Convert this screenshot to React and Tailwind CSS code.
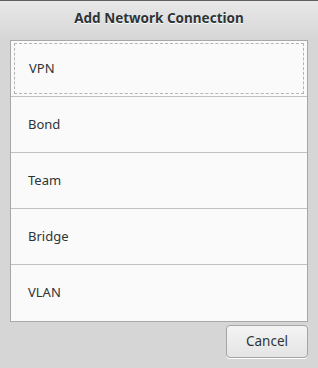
export default function App() {
  const items = ['VPN', 'Bond', 'Team', 'Bridge', 'VLAN'];
  return (
    <div
      className="w-[318px] h-[368px] flex flex-col bg-[#d6d6d6] border-t border-[#5c6060] text-[#2e3436]"
      style={{ fontFamily: '"Noto Sans", "Open Sans", sans-serif' }}
    >
      <div className="h-[39px] flex items-center justify-center bg-gradient-to-b from-[#e8e8e8] to-[#d6d6d6]">
        <h1 className="text-[13.5px] font-bold [text-shadow:0_1px_#ffffff] -mt-[4px]">Add Network Connection</h1>
      </div>
      <div className="mx-[10px] h-[282px] border border-[#a8a8a8] bg-[#fafafa] flex flex-col">
        {items.map((name, i) => (
          <div
            key={name}
            className={`h-[56px] flex items-center px-[3px] ${i < items.length - 1 ? 'border-b border-[#c2c2c2]' : ''}`}
          >
            <div
              className={`flex-1 h-[51px] flex items-center pl-[14px] text-[13px] ${i === 0 ? 'border border-dashed border-[#b4b4b4]' : ''}`}
            >
              {name}
            </div>
          </div>
        ))}
      </div>
      <div className="flex justify-end px-[10px] pt-[3px]">
        <button className="w-[82px] h-[33px] rounded-[4px] border border-[#a5a5a5] bg-gradient-to-b from-[#f4f4f4] to-[#e4e4e4] shadow-[0_1px_0_#ffffff] text-[13.5px]">
          Cancel
        </button>
      </div>
    </div>
  );
}
